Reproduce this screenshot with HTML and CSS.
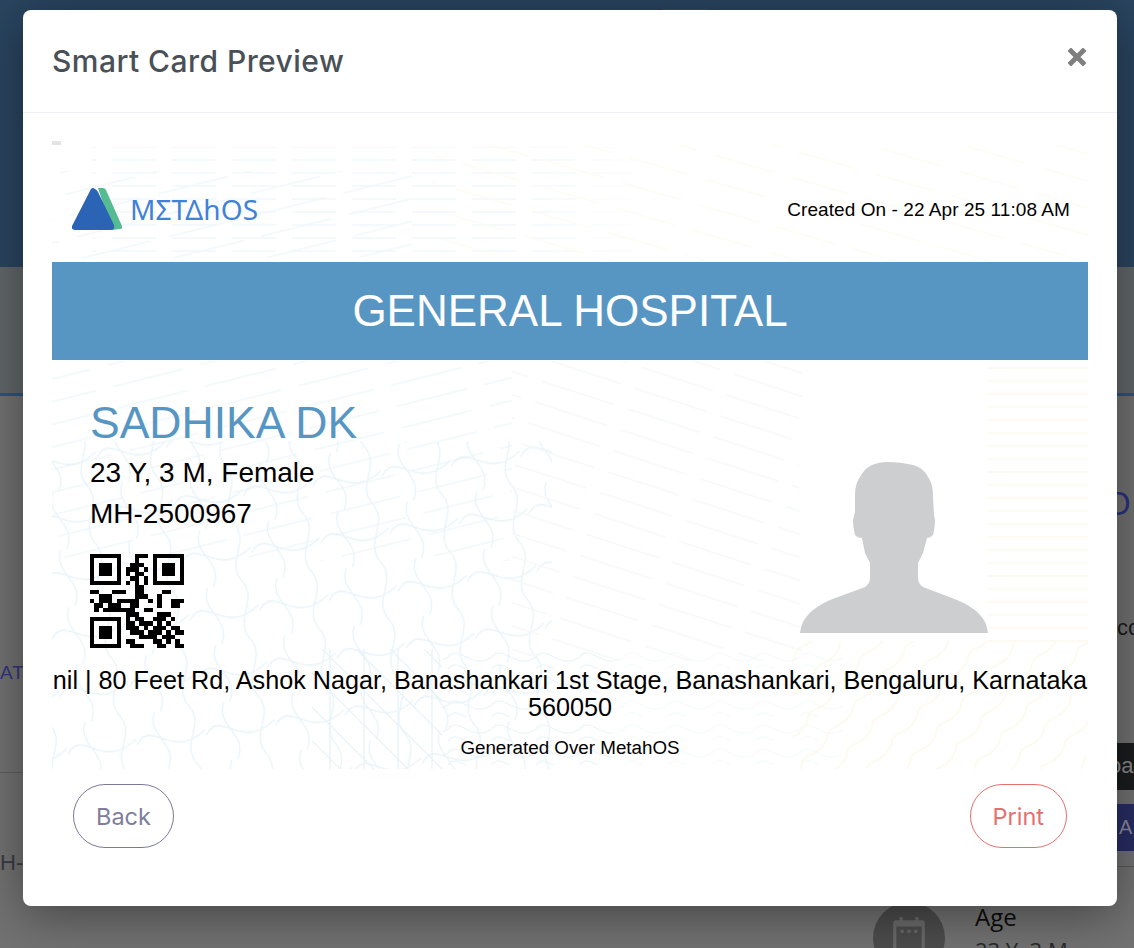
FILE: index.html
```html
<!DOCTYPE html>
<html lang="en">
<head>
    <meta charset="UTF-8" />
    <title>Smart Card Preview</title>
    <link rel="stylesheet" href="styles.css">
</head>
<body>

    <!-- page behind the dialog -->
    <div class="page">
        <div class="topbar"><span class="topbar-tab"></span></div>
        <div class="subbar"></div>
        <div class="content">
            <div class="peek-left">
                <span class="peek-tab">AT</span>
                <span class="peek-line"></span>
                <span class="peek-id">H-</span>
            </div>
            <div class="peek-right">
                <span class="peek-o">O</span>
                <span class="peek-co">co</span>
                <span class="peek-dark">oa</span>
                <span class="peek-blue">A</span>
                <span class="peek-rule"></span>
                <div class="age-row">
                    <span class="age-icon">
                        <svg width="32" height="38" viewBox="0 0 30 36">
                            <path fill="#6a6a6a" d="M6 0h3v3h12V0h3v3h3a3 3 0 0 1 3 3v30H0V6a3 3 0 0 1 3-3h3z"/>
                            <path fill="#4c4c4c" d="M3 9h24v27H3z"/>
                            <path fill="#6a6a6a" d="M7 12h3v3H7zM13.500 12h3v3h-3zM20 12h3v3h-3z"/>
                        </svg>
                    </span>
                    <div class="age-text">
                        <span class="age-label">Age</span>
                        <span class="age-value">23 Y, 3 M</span>
                    </div>
                </div>
            </div>
        </div>
    </div>

    <div class="modal">
        <div class="modal-header">
            <h2 class="modal-title">Smart Card Preview</h2>
            <svg class="modal-close" width="18" height="18" viewBox="0 0 18 18">
                <path d="M3 3l12 12M15 3L3 15" stroke="#7f7f7f" stroke-width="5" stroke-linecap="square" fill="none"/>
            </svg>
        </div>

        <div class="modal-body">
            <div class="card">

                <!-- security print behind the card -->
                <svg class="card-print" width="1036" height="628" viewBox="0 0 1036 628">
                    <defs>
                        <linearGradient id="fadeRight" x1="0" x2="1" y1="0" y2="0">
                            <stop offset="0" stop-color="#fff"/>
                            <stop offset="0.7" stop-color="#fff"/>
                            <stop offset="1" stop-color="#000"/>
                        </linearGradient>
                        <mask id="fadeMask" maskContentUnits="objectBoundingBox">
                            <rect width="1" height="1" fill="url(#fadeRight)"/>
                        </mask>
                        <pattern id="lineBlue" width="60" height="13" patternUnits="userSpaceOnUse">
                            <path d="M0 6h44" stroke="#f0f7fb" stroke-width="1.500"/>
                        </pattern>
                        <pattern id="slantYellow" width="80" height="26" patternUnits="userSpaceOnUse" patternTransform="rotate(16)">
                            <path d="M0 13h62" stroke="#fcfbf3" stroke-width="1.500"/>
                        </pattern>
                        <pattern id="slantBlue" width="90" height="22" patternUnits="userSpaceOnUse" patternTransform="rotate(-14)">
                            <path d="M0 11h72" stroke="#f0f7fb" stroke-width="1.500"/>
                        </pattern>
                        <pattern id="slantGrey" width="90" height="22" patternUnits="userSpaceOnUse" patternTransform="rotate(18)">
                            <path d="M0 11h76" stroke="#f6f8f7" stroke-width="1.500"/>
                        </pattern>
                        <pattern id="waveBlue" width="44" height="24" patternUnits="userSpaceOnUse">
                            <path d="M0 12c11-14 22 14 44 0M0 24c11-14 22 14 44 0" stroke="#eaf4f9" stroke-width="1.200" fill="none"/>
                        </pattern>
                        <pattern id="knotBlue" width="70" height="58" patternUnits="userSpaceOnUse" patternTransform="rotate(-8)">
                            <path d="M0 30C18 4 32 52 70 24M22 0c-12 22 20 34 6 58M58 0c12 20-16 36 0 58" stroke="#e8f3f9" stroke-width="1.300" fill="none"/>
                        </pattern>
                        <pattern id="hatchBlue" width="34" height="34" patternUnits="userSpaceOnUse">
                            <path d="M6 0v34M0 0l34 34" stroke="#e6f2f8" stroke-width="1.200" fill="none"/>
                        </pattern>
                        <pattern id="waveYellow" width="38" height="26" patternUnits="userSpaceOnUse" patternTransform="rotate(-48)">
                            <path d="M0 13c10-9 18 9 38 0" stroke="#fcf9ec" stroke-width="1.800" fill="none"/>
                        </pattern>
                        <pattern id="lineYellow" width="100" height="13" patternUnits="userSpaceOnUse">
                            <path d="M0 6h100" stroke="#fdfaec" stroke-width="1.500"/>
                        </pattern>
                    </defs>
                    <rect x="0" y="0" width="9" height="4" fill="#e4e4e4"/>
                    <rect x="40" y="6" width="580" height="112" fill="url(#lineBlue)" mask="url(#fadeMask)"/>
                    <rect x="0" y="30" width="360" height="90" fill="url(#slantBlue)"/>
                    <rect x="380" y="4" width="656" height="116" fill="url(#slantYellow)"/>
                    <rect x="0" y="220" width="460" height="200" fill="url(#slantBlue)"/>
                    <rect x="0" y="300" width="500" height="328" fill="url(#knotBlue)"/>
                    <rect x="260" y="508" width="130" height="120" fill="url(#hatchBlue)"/>
                    <rect x="390" y="508" width="170" height="120" fill="url(#waveBlue)"/>
                    <rect x="460" y="220" width="290" height="300" fill="url(#slantGrey)"/>
                    <rect x="560" y="510" width="230" height="118" fill="url(#waveBlue)" opacity="0.500"/>
                    <rect x="740" y="500" width="296" height="128" fill="url(#waveYellow)"/>
                    <rect x="936" y="222" width="100" height="290" fill="url(#lineYellow)"/>
                </svg>

                <div class="card-top">
                    <div class="logo">
                        <svg width="50" height="42" viewBox="0 0 50 42">
                            <path fill="#55bb92" d="M26 0h5q2 0 3 2l16 36q1 3-2 3l-8 1z"/>
                            <path fill="#2b64b4" d="M19 1q2-2 4 0q2 1 3 3l16 33q1 5-3 5H3q-4 0-3-4z"/>
                        </svg>
                        <span class="logo-text">ΜΣΤΔhOS</span>
                    </div>
                    <span class="created">Created On - 22 Apr 25 11:08 AM</span>
                </div>

                <div class="hospital">GENERAL HOSPITAL</div>

                <div class="patient">
                    <div class="patient-info">
                        <div class="patient-name">SADHIKA DK</div>
                        <div class="patient-line">23 Y, 3 M, Female</div>
                        <div class="patient-line">MH-2500967</div>
                        <svg class="qr" width="94" height="94" viewBox="0 0 21 21" shape-rendering="crispEdges">
                            <path fill="#000" fill-rule="evenodd" d="M0 0h7v7H0zM1 1v5h5V1zM2 2h3v3H2zM14 0h7v7h-7zM15 1v5h5V1zM16 2h3v3h-3zM0 14h7v7H0zM1 15v5h5v-5zM2 16h3v3H2z"/>
                            <path fill="#000" d="M10 0h3v1h-3zM10 1h1v1h-1zM9 2h3v1H9zM8 3h3v1H8zM12 3h1v1h-1zM8 4h1v1H8zM10 4h2v1h-2zM9 5h2v1H9zM12 5h1v1h-1zM8 6h1v1H8zM10 6h1v1h-1zM12 6h1v1h-1zM10 7h2v1h-2zM0 8h2v1H0zM5 8h3v1H5zM10 8h2v1h-2zM16 8h2v1h-2zM2 9h3v1H2zM10 9h3v1h-3zM15 9h1v1h-1zM0 10h1v1H0zM2 10h3v1H2zM6 10h5v1H6zM13 10h1v1h-1zM15 10h1v1h-1zM18 10h3v1h-3zM1 11h2v1H1zM4 11h3v1H4zM9 11h2v1H9zM15 11h1v1h-1zM18 11h2v1h-2zM1 12h1v1H1zM3 12h5v1H3zM8 12h2v1H8zM12 12h2v1h-2zM8 13h3v1H8zM15 13h3v1h-3zM8 14h1v1H8zM10 14h2v1h-2zM14 14h3v1h-3zM18 14h1v1h-1zM8 15h2v1H8zM11 15h3v1h-3zM15 15h1v1h-1zM17 15h1v1h-1zM8 16h3v1H8zM12 16h1v1h-1zM14 16h3v1h-3zM18 16h2v1h-2zM9 17h3v1H9zM13 17h3v1h-3zM17 17h1v1h-1zM19 17h2v1h-2zM11 18h4v1h-4zM16 18h3v1h-3zM8 19h2v1H8zM14 19h2v1h-2zM17 19h1v1h-1zM19 19h1v1h-1zM9 20h3v1H9zM15 20h2v1h-2zM19 20h2v1h-2z"/>
                        </svg>
                    </div>
                    <svg class="avatar" width="188" height="193" viewBox="0 -21 188 193">
                        <path fill="#cdced0" d="M88 1C96 1 104 2 113 4C120 6 125 10 128 16C132 22 133 28 133 36L134 54L135 59C135 65 134 70 133 74C131 76 129 77 127 77L123 92L118 102V117C118 121 120 124 123 126L157 139C168 144 175 148 180 154C185 159 187 165 188 172H0C1 165 3 159 8 154C13 148 20 144 30 139L65 126C68 124 70 121 70 117V102L65 92L62 77C59 77 57 76 55 74C54 70 53 65 53 59L55 51V36C55 28 56 22 60 16C63 10 67 6 72 4C77 2 82 1 88 1Z"/>
                    </svg>
                </div>

                <div class="address">nil | 80 Feet Rd, Ashok Nagar, Banashankari 1st Stage, Banashankari, Bengaluru, Karnataka 560050</div>
                <div class="generated">Generated Over MetahOS</div>
            </div>
        </div>

        <div class="modal-footer">
            <button class="btn btn-back">Back</button>
            <button class="btn btn-print">Print</button>
        </div>
    </div>

</body>
</html>
```

FILE: styles.css
```css
* {
    box-sizing: border-box;
}

html, body {
    margin: 0;
    height: 948px;
    overflow: hidden;
}

body {
    position: relative;
    font-family: "Liberation Sans", Arial, sans-serif;
    background-color: #727272;
}

/* page behind the dialog */
.page {
    height: 948px;
    overflow: hidden;
    display: flex;
    flex-direction: column;
}

.topbar {
    height: 267px;
    background-color: #2a4560;
    display: flex;
    justify-content: center;
    flex-shrink: 0;
}

.topbar-tab {
    width: 45px;
    height: 1px;
    margin: 9px 0 0 235px;
    background-color: #2a5b58;
}

.subbar {
    height: 129px;
    background-color: #62676a;
    border-bottom: 3px solid #2b5585;
    flex-shrink: 0;
}

.content {
    flex: 1;
    display: flex;
    justify-content: space-between;
    background-color: #727272;
}

.peek-left {
    width: 23px;
    display: flex;
    flex-direction: column;
    overflow: hidden;
}

.peek-tab {
    margin-top: 265px;
    font-size: 19px;
    line-height: 24px;
    letter-spacing: 1px;
    color: #2f3580;
    white-space: nowrap;
}

.peek-line {
    height: 1px;
    margin-top: 87px;
    background-color: #5e5e5e;
}

.peek-id {
    margin-top: 77px;
    font-size: 22px;
    line-height: 26px;
    color: #3a3b45;
    white-space: nowrap;
}

.peek-right {
    width: 261px;
    display: flex;
    flex-direction: column;
    overflow: hidden;
    flex-shrink: 0;
}

.peek-right > span {
    padding-left: 244px;
    white-space: nowrap;
    flex-shrink: 0;
}

.peek-o {
    margin-top: 88px;
    margin-left: -12px;
    font-size: 33px;
    line-height: 40px;
    color: #2b3280;
}

.peek-co {
    margin-top: 91px;
    font-size: 22px;
    line-height: 26px;
    color: #1a1a1a;
}

.peek-dark {
    margin-top: 102px;
    height: 47px;
    font-size: 22px;
    line-height: 46px;
    text-indent: -8px;
    color: #8a8a8a;
    background-color: #1b1c1d;
}

.peek-blue {
    margin-top: 14px;
    height: 47px;
    font-size: 20px;
    line-height: 47px;
    text-indent: 2px;
    color: #8a8aa0;
    background-color: #282d63;
}

.peek-rule {
    height: 1px;
    margin-top: 15px;
    background-color: #5b5b5b;
}

.age-row {
    margin-top: 35px;
    display: flex;
    gap: 30px;
    flex-shrink: 0;
}

.age-icon {
    width: 72px;
    height: 72px;
    flex-shrink: 0;
    border-radius: 50%;
    background-color: #4c4c4c;
    display: flex;
    justify-content: center;
    padding-top: 15px;
}

.age-text {
    display: flex;
    flex-direction: column;
    font-family: "Open Sans", sans-serif;
}

.age-label {
    font-size: 24px;
    line-height: 30px;
    color: #0d0d0d;
}

.age-value {
    margin-top: 3px;
    font-size: 22px;
    line-height: 30px;
    color: #2a2a2a;
}

/* dialog */
.modal {
    position: absolute;
    top: 10px;
    left: 23px;
    width: 1094px;
    height: 896px;
    background-color: #fff;
    border-radius: 8px;
    box-shadow: 0 8px 50px rgba(0, 0, 0, 0.42);
}

.modal-header {
    height: 103px;
    padding: 0 31px 0 29px;
    display: flex;
    justify-content: space-between;
    align-items: center;
    border-bottom: 1px solid #eff0f6;
}

.modal-title {
    margin: 0;
    font-family: Inter, sans-serif;
    font-size: 30px;
    font-weight: 500;
    letter-spacing: 0.45px;
    color: #495057;
}

.modal-close {
    margin-top: -8px;
}

.modal-body {
    padding: 28px 29px 0;
}

/* card */
.card {
    position: relative;
    width: 1036px;
    height: 628px;
    color: #000;
}

.card > * {
    position: relative;
}

.card .card-print {
    position: absolute;
    top: 0;
    left: 0;
}

.card-top {
    height: 121px;
    padding: 47px 18px 0 20px;
    display: flex;
    justify-content: space-between;
}

.logo {
    display: flex;
    gap: 8px;
    height: 42px;
}

.logo-text {
    font-family: "Noto Sans", sans-serif;
    font-size: 28px;
    line-height: 42px;
    letter-spacing: 0.1px;
    color: #3f82d8;
}

.created {
    padding-top: 1px;
    font-size: 19px;
    line-height: 42px;
    letter-spacing: 0.07px;
}

.hospital {
    height: 98px;
    background-color: #5796c3;
    color: #fff;
    font-size: 44px;
    line-height: 98px;
    text-align: center;
}

.patient {
    height: 307px;
    padding: 39px 100px 0 38px;
    display: flex;
    justify-content: space-between;
}

.patient-name {
    font-size: 44.500px;
    line-height: 48px;
    color: #5796c3;
}

.patient-line {
    font-size: 28px;
    line-height: 41px;
}

.patient-name + .patient-line {
    margin-top: 5px;
}

.qr {
    display: block;
    margin-top: 20px;
}

.avatar {
    background-color: #fff;
    margin-top: 41px;
}

.address {
    font-size: 25.200px;
    line-height: 27px;
    text-align: center;
}

.generated {
    margin-top: 16px;
    font-size: 18.800px;
    line-height: 21px;
    text-align: center;
}

/* footer buttons */
.modal-footer {
    margin-top: 15px;
    padding: 0 50px;
    display: flex;
    justify-content: space-between;
}

.btn {
    height: 64px;
    padding: 0 22px;
    background-color: #fff;
    border-radius: 32px;
    font-family: Inter, sans-serif;
    font-size: 23.500px;
}

.btn-back {
    color: #7e7e9c;
    border: 1px solid #7a7a98;
}

.btn-print {
    color: #e56f6f;
    border: 1px solid #e56f6f;
}
```
